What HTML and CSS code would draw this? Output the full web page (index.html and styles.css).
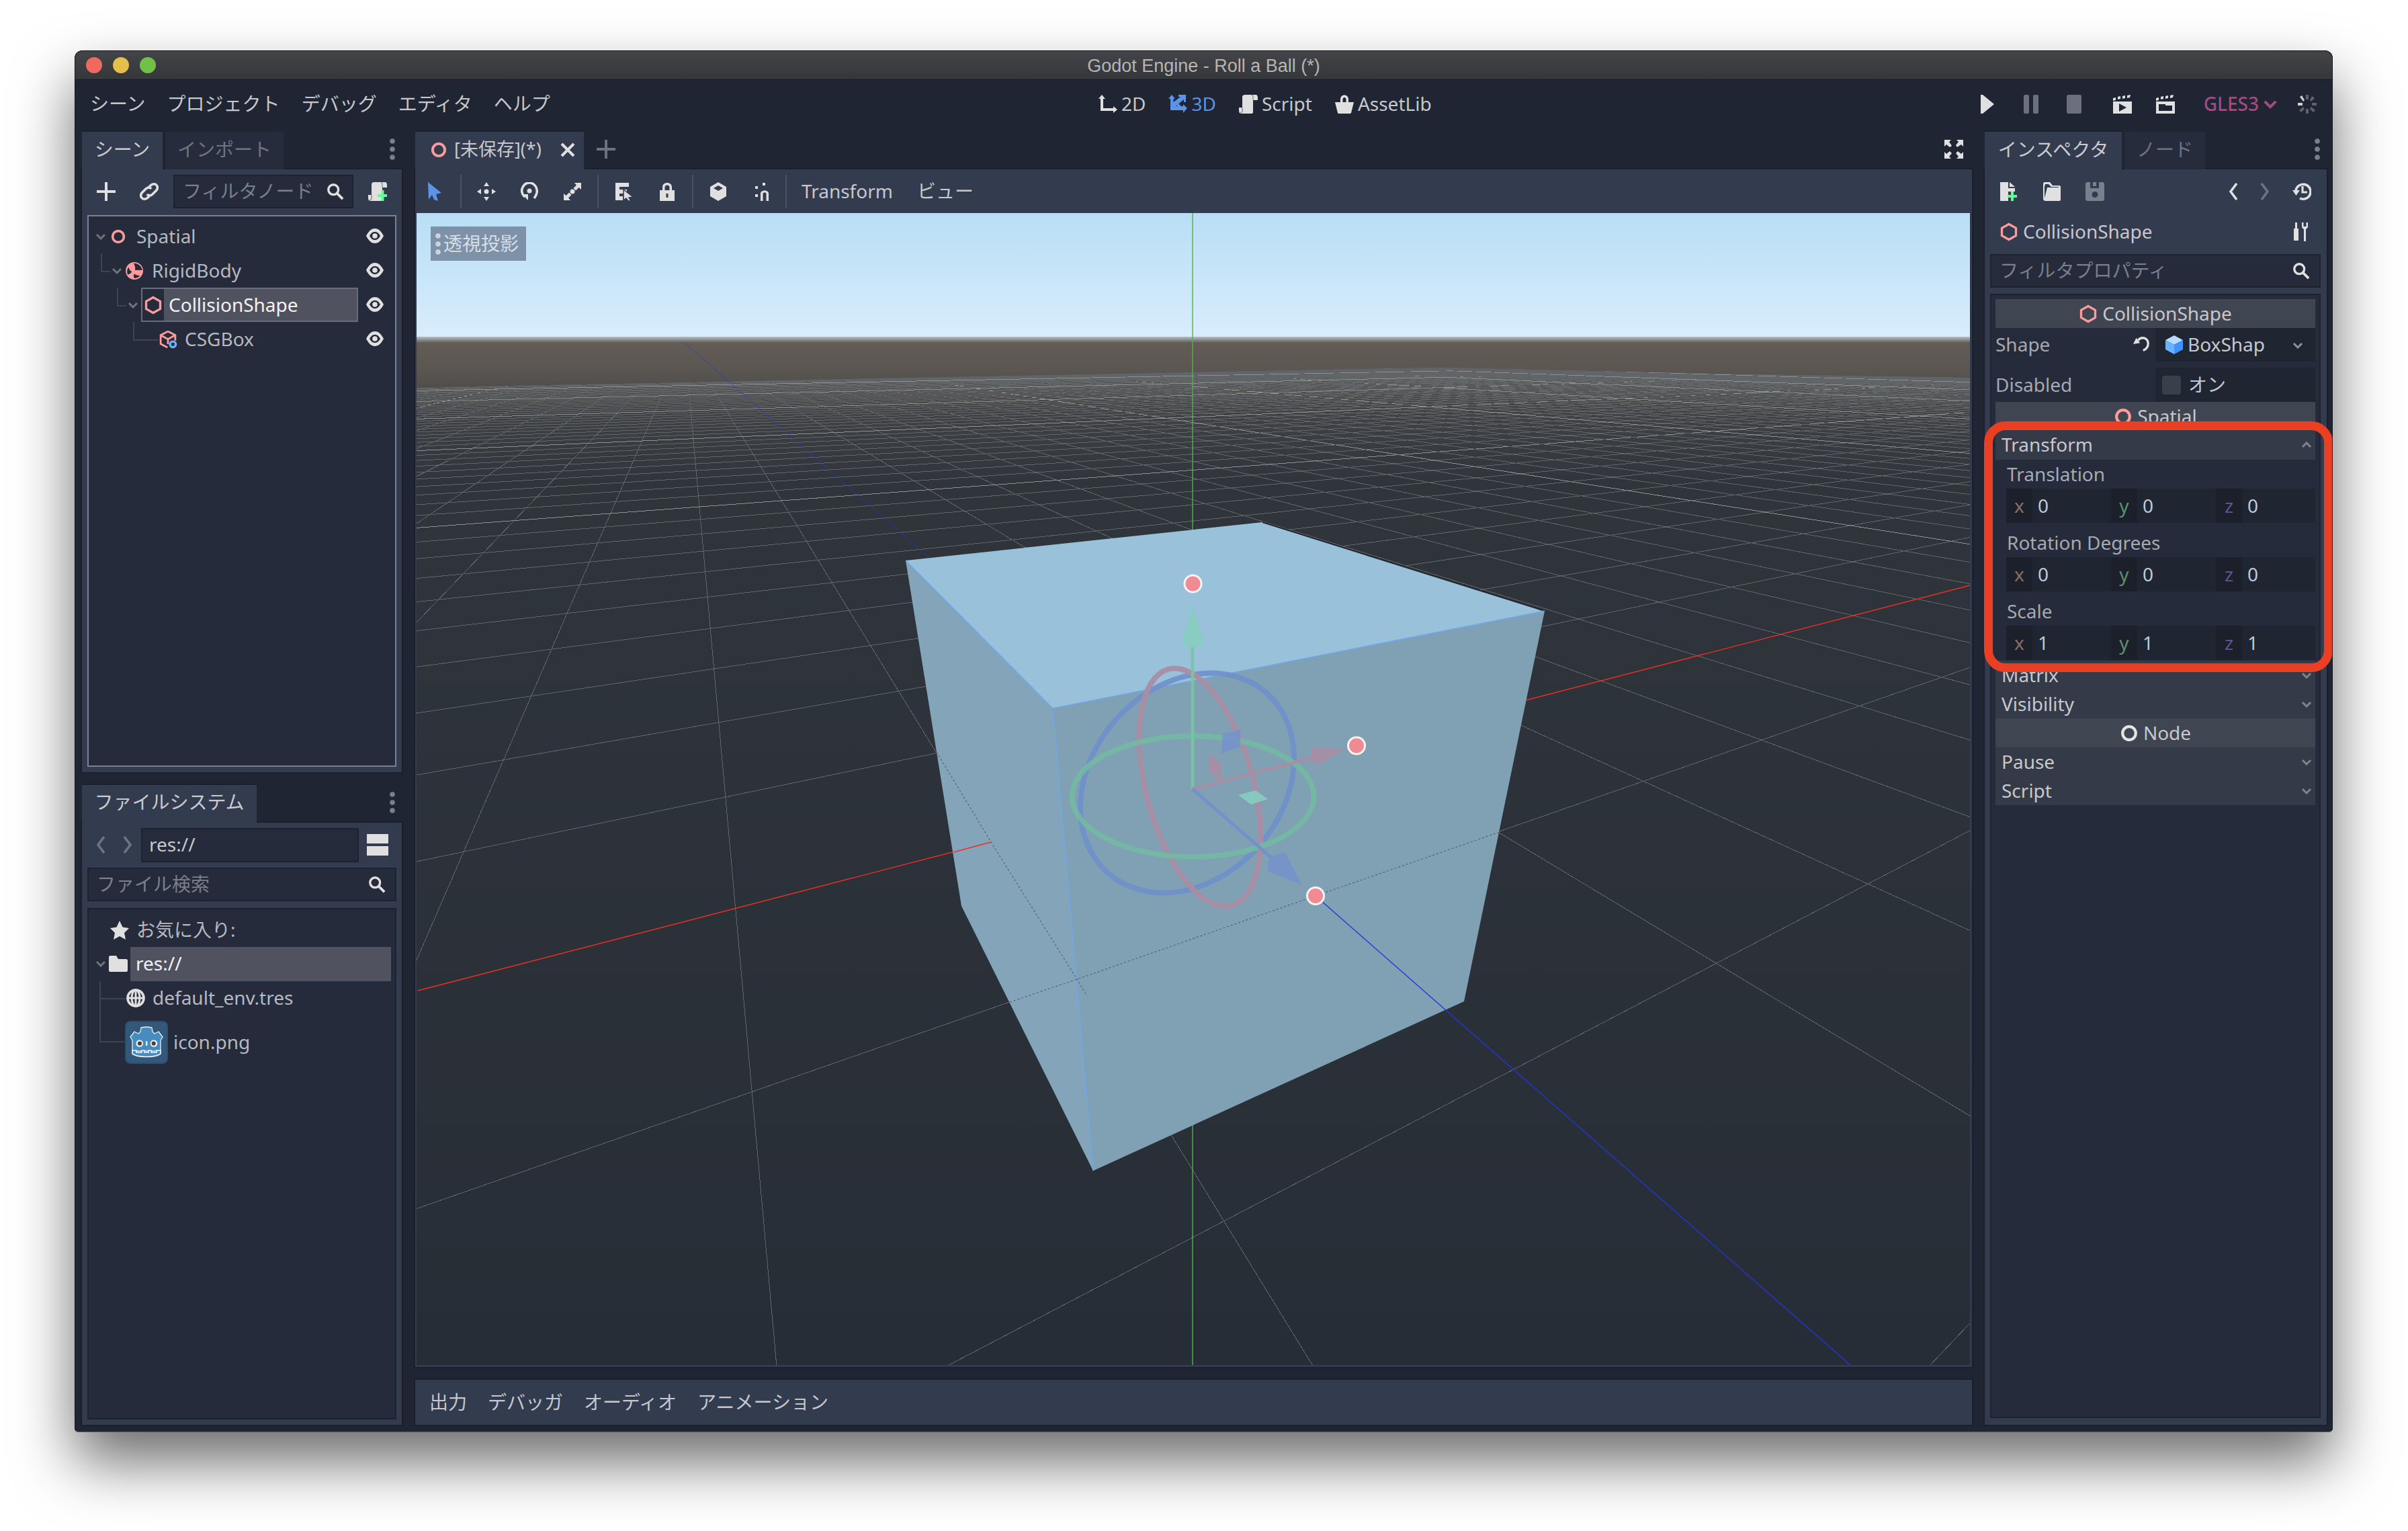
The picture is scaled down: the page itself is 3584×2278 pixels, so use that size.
FILE: index.html
```html
<!DOCTYPE html>
<html lang="ja">
<head>
<meta charset="utf-8">
<title>Godot Engine - Roll a Ball (*)</title>
<link rel="stylesheet" href="styles.css">
</head>
<body>
<svg class="defs" width="0" height="0">
  <defs>
    <symbol id="i-ring" viewBox="0 0 16 16"><circle cx="8" cy="8" r="5.6" fill="none" stroke="currentColor" stroke-width="2.4"/></symbol>
    <symbol id="i-hex" viewBox="0 0 16 16"><path d="M8 1.4 14 4.8V11.2L8 14.6 2 11.2V4.8Z" fill="none" stroke="currentColor" stroke-width="1.9" stroke-linejoin="miter"/></symbol>
    <symbol id="i-rigid" viewBox="0 0 16 16"><circle cx="8" cy="8" r="7.4" fill="#fc9c9c"/><path d="M7.4 1.6C8.4 3.6 9 5.4 8.6 7.4H14.6C14.4 4.2 11 1.4 7.4 1.6ZM3 4.8C3.6 6.6 4.6 8 6 8.8 4.6 10.4 3.4 11 2.4 11.2 1.4 9 1.8 6.4 3 4.8ZM8 10.6C9.6 11.6 11 12.2 12.8 12.2 11.6 13.6 9.8 14.4 8 14.2 7 13.2 7.2 11.6 8 10.6Z" fill="#252b3a"/></symbol>
    <symbol id="i-csg" viewBox="0 0 16 16"><path d="M8 1.2 14.2 4.4V9M8 1.2 1.8 4.4V11.8L7.6 14.8M1.8 4.4 8 7.8 14.2 4.4M8 7.8V12" fill="none" stroke="#fc9c9c" stroke-width="1.6"/><circle cx="12.2" cy="12.2" r="3.4" fill="#69b4ff"/><rect x="10.9" y="10.9" width="2.6" height="2.6" fill="#252b3a"/></symbol>
    <symbol id="i-eye" viewBox="0 0 28 24"><path d="M1 12C5 4 9.500 1 14 1S23 4 27 12C23 20 18.500 23 14 23S5 20 1 12ZM6 12C8.500 16.500 11 18 14 18S19.500 16.500 22 12C19.500 7.500 17 6 14 6S8.500 7.500 6 12Z" fill="#e0e0e0" fill-rule="evenodd"/><circle cx="14" cy="12" r="3.800" fill="#e0e0e0"/></symbol>
    <symbol id="i-chev" viewBox="0 0 16 10"><path d="M2 2 8 8 14 2" fill="none" stroke="currentColor" stroke-width="3"/></symbol>
    <symbol id="i-search" viewBox="0 0 28 28"><circle cx="11" cy="11" r="8" fill="none" stroke="currentColor" stroke-width="3.600"/><path d="M16.500 16.500 26 26" stroke="currentColor" stroke-width="4"/></symbol>
    <symbol id="i-dots" viewBox="0 0 8 32"><circle cx="4" cy="4" r="3.800" fill="currentColor"/><circle cx="4" cy="16" r="3.800" fill="currentColor"/><circle cx="4" cy="28" r="3.800" fill="currentColor"/></symbol>
    <symbol id="i-plus" viewBox="0 0 28 28"><path d="M14 0V28M0 14H28" stroke="currentColor" stroke-width="4"/></symbol>
    <symbol id="i-link" viewBox="0 0 28 28"><path d="M12 9 16 5C19 2 23 2 25 4.500S27 10 24 13L19 18C16 21 12.500 20.500 11 18M16 19 12 23C9 26 5 26 3 23.500S1 18 4 15L9 10C12 7 15.500 7.500 17 10" fill="none" stroke="#e0e0e0" stroke-width="3.600"/></symbol>
    <symbol id="i-scroll" viewBox="0 0 28 28"><path d="M9 0H25C27 0 28 2 28 4V8H21V26C21 27 20 28 19 28H4C2 28 0 27 0 24V19H5V3C5 1 7 0 9 0Z" fill="#e0e0e0"/><path d="M21 8V3C21 1 20 .500 19 .500" stroke="#9a9a9a" stroke-width="1.600" fill="none"/><path d="M5 19V24C5 26 3.500 27 2 26.500" stroke="#9a9a9a" stroke-width="1.800" fill="none"/></symbol>
    <symbol id="i-scriptadd" viewBox="0 0 28 28"><use href="#i-scroll"/><path d="M21.500 12V28M14 20H28" stroke="#5fff97" stroke-width="4" fill="none"/></symbol>
    <symbol id="i-x" viewBox="0 0 24 24"><path d="M3 3 21 21M21 3 3 21" stroke="#e0e0e0" stroke-width="4"/></symbol>
    <symbol id="i-left" viewBox="0 0 14 28"><path d="M12 2 3 14 12 26" fill="none" stroke="currentColor" stroke-width="3.600"/></symbol>
    <symbol id="i-right" viewBox="0 0 14 28"><path d="M2 2 11 14 2 26" fill="none" stroke="currentColor" stroke-width="3.600"/></symbol>
    <symbol id="i-2d" viewBox="0 0 28 28"><path d="M5 0 10 6H7V20H22V17L28 22 22 27V24H3V6H0Z" fill="currentColor"/></symbol>
    <symbol id="i-3d" viewBox="0 0 28 28"><path d="M5 0 10 6H7.500V11L18 3H15V0H26V11H23V7L11 17 22 17V14L28 20 22 27V23H3V6H0Z" fill="currentColor"/><path d="M10 10 21 22" stroke="currentColor" stroke-width="3.500"/></symbol>
    <symbol id="i-bag" viewBox="0 0 28 28"><path d="M8 11V7C8 3 10.500 .500 14 .500S20 3 20 7V11H16.500V7C16.500 5 15.500 4 14 4S11.500 5 11.500 7V11Z" fill="#e0e0e0"/><path d="M0 11H28L24 27C24 27.500 23 28 22 28H6C5 28 4 27.500 4 27Z" fill="#e0e0e0"/></symbol>
    <symbol id="i-select" viewBox="0 0 24 28"><path d="M2 0 22 16 14 18 17 28 11 26 8 19 3 26Z" fill="currentColor"/></symbol>
    <symbol id="i-move" viewBox="0 0 28 28"><path d="M14 0 18 6H10ZM14 28 10 22H18ZM0 14 6 10V18ZM28 14 22 18V10Z" fill="#e0e0e0"/><circle cx="14" cy="14" r="3.500" fill="#e0e0e0"/></symbol>
    <symbol id="i-rotate" viewBox="0 0 28 28"><path d="M7 22C3 18 2 14 3 10 5 4 9 1 14 1S24 5 25 11C26 16 24 20 21 24" fill="none" stroke="#e0e0e0" stroke-width="3.600"/><circle cx="14" cy="13" r="3.500" fill="#e0e0e0"/><path d="M3 18H12V27L9 24Z" fill="#e0e0e0"/></symbol>
    <symbol id="i-scale" viewBox="0 0 28 28"><path d="M17 1H27V11L23.500 8 19 12.500 15.500 9 20 4.500ZM1 17 4.500 20 9 15.500 12.500 19 8 23.500 11 27H1Z" fill="#e0e0e0"/><circle cx="14" cy="14" r="3.500" fill="#e0e0e0"/></symbol>
    <symbol id="i-group" viewBox="0 0 28 28"><path d="M1 1H21V7H7V11H18V17H7V21H12V27H1Z" fill="#e0e0e0"/><path d="M13 11 27 22 21 23 24 28 20 28 17 24 13 27Z" fill="#e0e0e0" stroke="#333b4f" stroke-width="1.500"/></symbol>
    <symbol id="i-lock" viewBox="0 0 28 28"><path d="M7 12V8C7 3 10 1 14 1S21 3 21 8V12H17.500V8C17.500 5.500 16 4.500 14 4.500S10.500 5.500 10.500 8V12Z" fill="#e0e0e0"/><path d="M3 12H25V28H3ZM12.500 17V23H15.500V17Z" fill="#e0e0e0" fill-rule="evenodd"/></symbol>
    <symbol id="i-cube" viewBox="0 0 28 28"><path d="M14 0 26 7V21L14 28 2 21V7ZM14 5 7 9 14 13 21 9Z" fill="#e0e0e0" fill-rule="evenodd"/></symbol>
    <symbol id="i-snap" viewBox="0 0 28 28"><path d="M13 28V17C13 11 25 11 25 17V28H21.500V17C21.500 15 16.500 15 16.500 17V28Z" fill="#e0e0e0"/><rect x="5" y="6" width="4" height="4" fill="#e0e0e0"/><rect x="16" y="1" width="4" height="4" fill="#e0e0e0"/><rect x="5" y="18" width="4" height="4" fill="#e0e0e0"/></symbol>
    <symbol id="i-full" viewBox="0 0 28 28"><path d="M0 0H10L7 3 11 9 8 11 3 7 0 10ZM28 0V10L25 7 19 11 17 8 21 3 18 0ZM0 28V18L3 21 8 17 11 20 7 25 10 28ZM28 28H18L21 25 17 20 20 17 25 21 28 18Z" fill="#e0e0e0"/></symbol>
    <symbol id="i-play" viewBox="0 0 28 28"><path d="M3 0H6L23 14 6 28H3Z" fill="currentColor"/></symbol>
    <symbol id="i-pause" viewBox="0 0 28 28"><rect x="3" y="0" width="8" height="28" rx="2" fill="currentColor"/><rect x="17" y="0" width="8" height="28" rx="2" fill="currentColor"/></symbol>
    <symbol id="i-stop" viewBox="0 0 28 28"><rect x="3" y="0" width="22" height="28" rx="2.500" fill="currentColor"/></symbol>
    <symbol id="i-movie" viewBox="0 0 28 28"><path d="M0 5 4 4V8L0 9ZM7 3 11 2V6L7 7ZM14 2 18 1V5L14 6ZM21 1 26 0 25 4 21 5Z" fill="#e0e0e0"/><path d="M0 10H28V28H0ZM9 13V25L20 19Z" fill="#e0e0e0" fill-rule="evenodd"/></symbol>
    <symbol id="i-movie2" viewBox="0 0 28 28"><path d="M0 5 4 4V8L0 9ZM7 3 11 2V6L7 7ZM14 2 18 1V5L14 6ZM21 1 26 0 25 4 21 5Z" fill="#e0e0e0"/><path d="M0 10H28V28H0ZM4 14V24H24V16H14V14Z" fill="#e0e0e0" fill-rule="evenodd"/></symbol>
    <symbol id="i-spin" viewBox="0 0 28 28"><g fill="#5d626d"><path d="M12 0H16V7H12ZM21 2 25 5 20 10 18 8ZM28 12V16H21V12ZM26 23 23 26 18 21 20 18ZM16 28H12V21H16ZM5 26 2 23 8 18 10 21Z"/></g><path d="M0 16V12H7V16Z" fill="#d0d0d0"/><path d="M3 3 6 1 10 8 8 10Z" fill="#d0d0d0"/></symbol>
    <symbol id="i-newdoc" viewBox="0 0 28 28"><path d="M1 0H13V9H23V14H13V28H1ZM15 0 23 7H15Z" fill="#e0e0e0"/><path d="M19 14V28M12 21H26" stroke="#5fff97" stroke-width="4" fill="none"/></symbol>
    <symbol id="i-open" viewBox="0 0 28 28"><path d="M3 0H11L15 5H25C26 5 27 6 27 7V26C27 27 26 28 25 28H5C3 28 1 27 1 25V3C1 1 2 0 3 0Z" fill="#e0e0e0"/><path d="M3 7V24L7 8H24V7H13L9 3H4Z" fill="#333b4f"/></symbol>
    <symbol id="i-save" viewBox="0 0 28 28"><path d="M3 0H7V9H20V0H25C27 0 28 1 28 3V25C28 27 27 28 25 28H3C1 28 0 27 0 25V3C0 1 1 0 3 0ZM14 14A4.500 4.500 0 1 0 14 23 4.500 4.500 0 0 0 14 14ZM11 0H16V6H11Z" fill="#7a7f8d" fill-rule="evenodd"/></symbol>
    <symbol id="i-history" viewBox="0 0 28 28"><path d="M5 14A11 11 0 1 1 11 24" fill="none" stroke="#e0e0e0" stroke-width="3.600"/><path d="M0 12H11L5.500 20Z" fill="#e0e0e0"/><path d="M15 6V15H22" fill="none" stroke="#e0e0e0" stroke-width="3.200"/></symbol>
    <symbol id="i-tool" viewBox="0 0 28 28"><path d="M5 0H8V9H10V27H3V9H5Z" fill="#e0e0e0"/><path d="M15 0V6C15 8 16.500 9 18 10V28H21V10C22.500 9 24 8 24 6V0H21.500V6H17.500V0Z" fill="#e0e0e0"/></symbol>
    <symbol id="i-revert" viewBox="0 0 28 28"><path d="M9 7C11 4 14 3 16.500 3 21.500 3 25 7 25 12S22 21 17 23" fill="none" stroke="#e0e0e0" stroke-width="3.600"/><path d="M1 13 6 3 12 11Z" fill="#e0e0e0"/></symbol>
    <symbol id="i-box" viewBox="0 0 28 28"><path d="M14 0 27 7 14 14 1 7Z" fill="#b8dcff"/><path d="M1 7 14 14V28L1 21Z" fill="#69b4ff"/><path d="M27 7 14 14V28L27 21Z" fill="#3d93ff"/></symbol>
    <symbol id="i-star" viewBox="0 0 28 28"><path d="M14 0 18.500 9.500 28 11 21 18 23 28 14 23 5 28 7 18 0 11 9.500 9.500Z" fill="#e0e0e0"/></symbol>
    <symbol id="i-folder" viewBox="0 0 28 24"><path d="M2 0H11L14 5H26C27 5 28 6 28 7V22C28 23 27 24 26 24H2C1 24 0 23 0 22V2C0 1 1 0 2 0Z" fill="#e0e0e0"/></symbol>
    <symbol id="i-globe" viewBox="0 0 28 28"><circle cx="14" cy="14" r="12" fill="none" stroke="#e0e0e0" stroke-width="3.600"/><path d="M2 14H26M14 2V26" stroke="#e0e0e0" stroke-width="3"/><ellipse cx="14" cy="14" rx="6" ry="12" fill="none" stroke="#e0e0e0" stroke-width="3"/></symbol>
    <symbol id="i-list" viewBox="0 0 32 32"><rect width="32" height="14" fill="#e0e0e0"/><rect y="18" width="32" height="14" fill="#e0e0e0"/></symbol>
    <symbol id="i-logo" viewBox="0 0 64 64">
      <rect x="1" y="1" width="62" height="62" rx="7" fill="#33587a" stroke="#2f4f6e" stroke-width="2"/>
      <path d="M8 24 14 16 20 19 23 16 24 10 31 9 33 9 40 10 41 16 44 19 50 16 56 24 53 29V45H11V29Z" fill="#478cbf" stroke="#e6f0f7" stroke-width="1.300" stroke-linejoin="round"/>
      <path d="M11 44V49C20 55 44 55 53 49V44H47V47H39V44H35V47H29V44H25V47H17V44Z" fill="#478cbf" stroke="#f0f5fa" stroke-width="1.600"/>
      <circle cx="21.700" cy="33.500" r="5.300" fill="#f0f0f0"/><circle cx="43" cy="33.500" r="5.300" fill="#f0f0f0"/>
      <circle cx="22" cy="33.500" r="3.100" fill="#414042"/><circle cx="42.700" cy="33.500" r="3.100" fill="#414042"/>
      <rect x="31" y="30" width="2.400" height="7" rx="1" fill="#f0f0f0"/>
    </symbol>
  </defs>
</svg>

<div class="window">
  <header class="titlebar">
    <div class="lights"><span class="light l-red"></span><span class="light l-yellow"></span><span class="light l-green"></span></div>
    <div class="title">Godot Engine - Roll a Ball (*)</div>
  </header>

  <nav class="menubar">
    <div class="menu-left"><span>シーン</span><span>プロジェクト</span><span>デバッグ</span><span>エディタ</span><span>ヘルプ</span></div>
    <div class="modes">
      <span class="mode"><svg class="ico"><use href="#i-2d"/></svg>2D</span>
      <span class="mode on"><svg class="ico"><use href="#i-3d"/></svg>3D</span>
      <span class="mode"><svg class="ico"><use href="#i-scroll"/></svg>Script</span>
      <span class="mode"><svg class="ico"><use href="#i-bag"/></svg>AssetLib</span>
    </div>
    <div class="menu-right">
      <svg class="ico bright"><use href="#i-play"/></svg>
      <svg class="ico dim"><use href="#i-pause"/></svg>
      <svg class="ico dim"><use href="#i-stop"/></svg>
      <svg class="ico movie"><use href="#i-movie"/></svg>
      <svg class="ico"><use href="#i-movie2"/></svg>
      <span class="gles">GLES3<svg class="chev-gles"><use href="#i-chev"/></svg></span>
      <svg class="ico"><use href="#i-spin"/></svg>
    </div>
  </nav>

  <div class="workspace">
    <aside class="col-left">
      <section class="dock">
        <div class="tabs">
          <span class="tab active t-scene">シーン</span><span class="tab t-import">インポート</span>
          <svg class="dots"><use href="#i-dots"/></svg>
        </div>
        <div class="panel">
          <div class="tool-row">
            <span class="tbtn"><svg class="ico bright"><use href="#i-plus"/></svg></span>
            <span class="tbtn"><svg class="ico"><use href="#i-link"/></svg></span>
            <div class="field f-scene"><span>フィルタノード</span><svg class="ico-s"><use href="#i-search"/></svg></div>
            <span class="tbtn"><svg class="ico"><use href="#i-scriptadd"/></svg></span>
          </div>
          <div class="tree focus">
            <div class="row ind0"><svg class="tw"><use href="#i-chev"/></svg><svg class="ni pink"><use href="#i-ring"/></svg><span class="rl">Spatial</span><svg class="eye"><use href="#i-eye"/></svg></div>
            <div class="row ind1 conn"><svg class="tw"><use href="#i-chev"/></svg><svg class="ni"><use href="#i-rigid"/></svg><span class="rl">RigidBody</span><svg class="eye"><use href="#i-eye"/></svg></div>
            <div class="row ind2 conn"><svg class="tw"><use href="#i-chev"/></svg><div class="sel"><span class="sel-ic"><svg class="ni pink"><use href="#i-hex"/></svg></span><span class="rl strong">CollisionShape</span></div><svg class="eye"><use href="#i-eye"/></svg></div>
            <div class="row ind3 conn conn-long"><svg class="ni"><use href="#i-csg"/></svg><span class="rl">CSGBox</span><svg class="eye"><use href="#i-eye"/></svg></div>
          </div>
        </div>
      </section>

      <section class="dock">
        <div class="tabs">
          <span class="tab active t-fs">ファイルシステム</span>
          <svg class="dots"><use href="#i-dots"/></svg>
        </div>
        <div class="panel">
          <div class="nav-row">
            <span class="nbtn"><svg class="nav-ic"><use href="#i-left"/></svg></span>
            <span class="nbtn"><svg class="nav-ic"><use href="#i-right"/></svg></span>
            <div class="field f-path"><span class="val">res://</span></div>
            <span class="tbtn"><svg class="list"><use href="#i-list"/></svg></span>
          </div>
          <div class="field f-search"><span>ファイル検索</span><svg class="ico-s"><use href="#i-search"/></svg></div>
          <div class="tree files">
            <div class="frow fav"><svg class="ni"><use href="#i-star"/></svg><span class="rl">お気に入り:</span></div>
            <div class="frow root"><svg class="tw"><use href="#i-chev"/></svg><svg class="ni-f"><use href="#i-folder"/></svg><span class="root-sel">res://</span></div>
            <div class="frow child fconn"><svg class="ni"><use href="#i-globe"/></svg><span class="rl">default_env.tres</span></div>
            <div class="frow big fconn fconn2"><svg class="logo"><use href="#i-logo"/></svg><span class="rl">icon.png</span></div>
          </div>
        </div>
      </section>
    </aside>

    <main class="col-center">
      <div class="tabs tabs-center">
        <span class="tab active t-doc"><svg class="doc-ic pink"><use href="#i-ring"/></svg><span class="doc-name">[未保存](*)</span><svg class="doc-x"><use href="#i-x"/></svg></span>
        <svg class="doc-plus"><use href="#i-plus"/></svg>
        <svg class="doc-full"><use href="#i-full"/></svg>
      </div>
      <div class="editor">
        <div class="ed-toolbar">
          <svg class="tico blue"><use href="#i-select"/></svg><i class="sep s1"></i>
          <svg class="tico"><use href="#i-move"/></svg><svg class="tico"><use href="#i-rotate"/></svg><svg class="tico"><use href="#i-scale"/></svg><i class="sep s2"></i>
          <svg class="tico"><use href="#i-group"/></svg><svg class="tico"><use href="#i-lock"/></svg><i class="sep s3"></i>
          <svg class="tico"><use href="#i-cube"/></svg><svg class="tico"><use href="#i-snap"/></svg><i class="sep s4"></i>
          <span class="ed-menu">Transform</span><span class="ed-menu">ビュー</span>
        </div>
        <div class="viewport">
          <svg class="scene" viewBox="620 317 2312 1714" width="2312" height="1714">
            <defs>
              <linearGradient id="sky" x1="0" y1="0" x2="0" y2="1">
                <stop offset="0" stop-color="#b8def5"/><stop offset="1" stop-color="#d9edfc"/>
              </linearGradient>
              <linearGradient id="ground" x1="0" y1="0" x2="0" y2="1">
                <stop offset="0" stop-color="#b4bfc8"/><stop offset=".006" stop-color="#635c55"/>
                <stop offset=".03" stop-color="#5c5752"/><stop offset=".05" stop-color="#4f4d4c"/>
                <stop offset=".08" stop-color="#3f4145"/><stop offset=".14" stop-color="#30353c"/><stop offset="1" stop-color="#272d36"/>
              </linearGradient>
              <clipPath id="gridclip"><path d="M620 577 1360 562 1626 557 2025 549 2143 547 2321 551 2543 556 2932 562V2031H620Z"/></clipPath>
            </defs>
            <rect x="620" y="317" width="2312" height="186" fill="url(#sky)"/>
            <rect x="620" y="501" width="2312" height="1530" fill="url(#ground)"/>
            <g id="grid" clip-path="url(#gridclip)" class="grid"></g>
            <path class="axis-r" d="M622 1474 1475 1253M2232 1052 2932 871"/>
            <path class="axis-b faint" d="M1019 510 1400 845"/>
            <path class="axis-g" d="M1775 317V790M1775 1672V2031"/>

            <polygon class="face-left" points="1348,834 1567,1054 1627,1742 1431,1348"/>
            <polygon class="face-right" points="1567,1054 2299,909 2179,1490 1627,1742"/>
            <polygon class="face-top" points="1348,834 1879,777 2299,909 1567,1054"/>
            <path class="edge-dark" d="M1879 777 2299 909"/>
            <path class="edge-blue" d="M1348 834 1567 1054 2299 909M1567 1054 1627 1742"/>

            <path class="inner" d="M1394 1119 1475 1253 1603 1457 1618 1482M1503 1491 1603 1457 1958 1333 2232 1238"/>
            <path class="axis-r thin" d="M1419 1268 1475 1253"/>
            <path class="axis-b" d="M1958 1333 2755 2032"/>

            <ellipse class="ring ring-b" cx="1767" cy="1165" rx="178.500" ry="142" transform="rotate(-48.500 1767 1165)"/>
            <ellipse class="ring ring-p" cx="1786" cy="1171.500" rx="182" ry="80" transform="rotate(75.100 1786 1171.500)"/>
            <ellipse class="ring ring-g" cx="1775.500" cy="1185" rx="180" ry="90"/>

            <path class="gz gz-g" d="M1775 1174V960"/>
            <polygon class="tip tip-g" points="1775,901 1792,958 1775,964 1759,958"/>
            <path class="gz gz-r" d="M1775 1174 1955 1127"/>
            <polygon class="tip tip-r" points="2000,1115 1963,1138 1952,1132 1951,1114 1958,1112"/>
            <path class="gz gz-b" d="M1775 1174 1900 1283"/>
            <polygon class="tip tip-b" points="1938,1317 1887,1296 1888,1280 1905,1269 1914,1270"/>
            <polygon class="tip tip-b" points="1820,1092 1846,1086 1846,1111 1818,1121"/>
            <polygon class="tip tip-r" points="1800,1122 1818,1136 1818,1152 1816,1163 1800,1148"/>
            <polygon class="tip tip-g" points="1843,1183 1869,1176 1887,1189 1862,1197"/>

            <circle class="hd-o" cx="1775.500" cy="868.500" r="14"/><circle class="hd-i" cx="1775.500" cy="868.500" r="11"/>
            <circle class="hd-o" cx="2019" cy="1109.500" r="14"/><circle class="hd-i" cx="2019" cy="1109.500" r="11"/>
            <circle class="hd-o" cx="1958" cy="1333" r="14"/><circle class="hd-i" cx="1958" cy="1333" r="11"/>
          </svg>
          <div class="persp"><svg class="persp-dots"><use href="#i-dots"/></svg><span>透視投影</span></div>
        </div>
      </div>
      <footer class="bottom"><span>出力</span><span>デバッガ</span><span>オーディオ</span><span>アニメーション</span></footer>
    </main>

    <aside class="col-right">
      <div class="tabs">
        <span class="tab active t-insp">インスペクタ</span><span class="tab t-node">ノード</span>
        <svg class="dots"><use href="#i-dots"/></svg>
      </div>
      <div class="panel panel-right">
        <div class="insp-tools">
          <svg class="ico"><use href="#i-newdoc"/></svg><svg class="ico"><use href="#i-open"/></svg><svg class="ico"><use href="#i-save"/></svg>
          <span class="spacer"></span>
          <svg class="nav-ic bright"><use href="#i-left"/></svg><svg class="nav-ic faded"><use href="#i-right"/></svg><svg class="ico"><use href="#i-history"/></svg>
        </div>
        <div class="insp-obj"><svg class="ico pink"><use href="#i-hex"/></svg><span>CollisionShape</span><span class="spacer"></span><svg class="ico"><use href="#i-tool"/></svg></div>
        <div class="field f-prop"><span>フィルタプロパティ</span><svg class="ico-s"><use href="#i-search"/></svg></div>
        <div class="scroller">
          <div class="cat"><svg class="cat-ic pink"><use href="#i-hex"/></svg>CollisionShape</div>
          <div class="prop"><span class="pl">Shape<svg class="rev"><use href="#i-revert"/></svg></span><span class="pv"><svg class="box"><use href="#i-box"/></svg>BoxShap<svg class="pv-chev"><use href="#i-chev"/></svg></span></div>
          <div class="prop second"><span class="pl">Disabled</span><span class="pv"><i class="check"></i>オン</span></div>
          <div class="cat"><svg class="cat-ic pink"><use href="#i-ring"/></svg>Spatial</div>
          <div class="sect open">Transform<svg class="s-chev up"><use href="#i-chev"/></svg></div>
          <div class="sub">Translation</div>
          <div class="vec"><span class="cell"><b class="ax x">x</b>0</span><span class="cell"><b class="ax y">y</b>0</span><span class="cell last"><b class="ax z">z</b>0</span></div>
          <div class="sub later">Rotation Degrees</div>
          <div class="vec"><span class="cell"><b class="ax x">x</b>0</span><span class="cell"><b class="ax y">y</b>0</span><span class="cell last"><b class="ax z">z</b>0</span></div>
          <div class="sub later">Scale</div>
          <div class="vec"><span class="cell"><b class="ax x">x</b>1</span><span class="cell"><b class="ax y">y</b>1</span><span class="cell last"><b class="ax z">z</b>1</span></div>
          <div class="sect after">Matrix<svg class="s-chev"><use href="#i-chev"/></svg></div>
          <div class="sect">Visibility<svg class="s-chev"><use href="#i-chev"/></svg></div>
          <div class="cat white"><svg class="cat-ic"><use href="#i-ring"/></svg>Node</div>
          <div class="sect">Pause<svg class="s-chev"><use href="#i-chev"/></svg></div>
          <div class="sect">Script<svg class="s-chev"><use href="#i-chev"/></svg></div>
        </div>
      </div>
    </aside>
  </div>
  <div class="callout"></div>
</div>
<script src="grid.js"></script>
</body>
</html>
```
FILE: styles.css
```css
* { box-sizing: border-box; }
html, body { margin: 0; height: 2278px; overflow: hidden; }
body { background: #fff; font: 28px/1.2 "Noto Sans", "Noto Sans CJK JP", sans-serif; color: #c6c8cd; }
.defs { position: absolute; }
svg { display: block; flex: none; }
i, b { font-style: normal; font-weight: 400; }

.window { position: relative; width: 3361px; height: 2056px; margin: 75px 0 0 111px; background: #1f2532; border-radius: 12px 12px 6px 6px; box-shadow: 0 44px 88px rgba(0,0,0,.58); display: flex; flex-direction: column; }
.window::after { content: ""; position: absolute; inset: 0; border: 1px solid #1a1b1e; border-bottom-color: #55575d; border-radius: 12px 12px 6px 6px; pointer-events: none; }
.titlebar { position: relative; height: 44px; flex: none; background: linear-gradient(#444548, #353639); border-bottom: 1px solid #17181a; border-radius: 12px 12px 0 0; display: flex; align-items: center; justify-content: center; padding-top: 4px; }
.lights { position: absolute; left: 17px; top: 10px; display: flex; gap: 16px; }
.light { width: 24px; height: 24px; border-radius: 50%; }
.l-red { background: #ee6a5e; }
.l-yellow { background: #e3bf4b; }
.l-green { background: #72c04a; }
.title { font: 27px "Liberation Sans", sans-serif; color: #b4b5b7; }

.menubar { height: 77px; flex: none; display: flex; align-items: center; padding: 0 24px 6px 23px; }
.menu-left { width: 1501px; display: flex; gap: 32px; }
.ico { width: 28px; height: 28px; color: #e0e0e0; }
.ico-s { width: 26px; height: 26px; color: #e0e0e0; }
.modes { display: flex; gap: 34px; }
.mode { display: flex; align-items: center; gap: 6px; }
.mode.on, .mode.on .ico { color: #5b93e6; }
.menu-right { margin-left: auto; display: flex; align-items: center; gap: 36px; }
.bright { color: #e0e0e0; }
.dim { color: #6b707c; }
.movie { margin-left: 8px; }
.gles { display: flex; align-items: center; gap: 6px; margin: 0 -6px 0 7px; color: #a14c80; font-weight: 500; }
.chev-gles { width: 22px; height: 14px; color: #a14c80; }

.workspace { flex: 1; min-height: 0; display: flex; padding: 0 0 11px 11px; }
.col-left { width: 476px; display: flex; flex-direction: column; gap: 19px; }
.col-center { width: 2317px; margin-left: 20px; display: flex; flex-direction: column; }
.col-right { width: 509px; margin-left: 19px; display: flex; flex-direction: column; }
.dock { flex: 1; min-height: 0; display: flex; flex-direction: column; }

.tabs { height: 56px; flex: none; display: flex; gap: 4px; position: relative; align-items: stretch; }
.tab { display: flex; align-items: center; justify-content: center; background: #262c3b; color: #6f7482; padding-bottom: 3px; white-space: nowrap; }
.tab.active { background: #333b4f; color: #c9cbd0; box-shadow: 0 -2px 0 #1a1f2b; }
.t-scene { width: 120px; }
.t-import { width: 176px; }
.t-fs { width: 260px; }
.t-insp { width: 204px; }
.t-node { width: 120px; }
.dots { width: 8px; height: 32px; position: absolute; right: 10px; top: 10px; color: #7c808a; }

.panel { flex: 1; min-height: 0; background: #333b4f; box-shadow: 0 0 0 2px #1a1f2b; padding: 8px; display: flex; flex-direction: column; }
.tool-row { height: 50px; flex: none; display: flex; gap: 8px; margin-bottom: 10px; }
.tbtn { width: 56px; flex: none; display: flex; align-items: center; justify-content: center; }
.field { display: flex; align-items: center; justify-content: space-between; background: #252b3a; box-shadow: inset 0 0 0 2px #1d2230; color: #7a7f8a; flex: none; white-space: nowrap; }
.f-scene { width: 268px; padding: 0 14px; }
.tree { flex: 1; min-height: 0; background: #252b3a; padding: 6px 0 0; box-shadow: inset 0 0 0 2px #1d2230; }
.tree.focus { box-shadow: inset 0 0 0 2px #7b8191; }
.row { position: relative; height: 51px; display: flex; align-items: center; color: #b6b9c0; }
.tw { width: 16px; height: 10px; color: #6f737d; margin-right: 4px; }
.ni { width: 28px; height: 28px; margin-right: 11px; }
.pink { color: #fc9c9c; }
.rl { white-space: nowrap; }
.eye { position: absolute; left: 414px; top: 13px; width: 28px; height: 24px; }
.ind0 { padding-left: 12px; }
.ind1 { padding-left: 36px; }
.ind2 { padding-left: 60px; }
.ind3 { padding-left: 106px; }
.ind0 .ni { width: 24px; height: 24px; margin: 0 13px 0 2px; }
.ind0 .rl { margin-left: 2px; }
.ind1 .rl { margin-left: 1px; }
.conn::before { content: ""; position: absolute; top: 0; left: 20px; width: 12px; height: 26px; border-left: 2px solid #3c4351; border-bottom: 2px solid #3c4351; }
.ind2.conn::before { left: 44px; }
.ind3.conn::before { left: 68px; width: 36px; }
.sel { position: absolute; left: 80px; top: 0; width: 323px; height: 51px; display: flex; background: #50535f; box-shadow: inset 0 0 0 2px #676d7e; }
.sel-ic { width: 32px; margin: 2px 0 2px 2px; background: #252b3a; display: flex; align-items: center; justify-content: center; }
.sel-ic .ni { margin: 0; }
.strong { color: #f2f2f2; align-self: center; margin-left: 7px; }

.nav-row { height: 51px; flex: none; display: flex; margin-bottom: 8px; }
.nbtn { width: 40px; display: flex; align-items: center; justify-content: center; color: #6f7482; }
.nav-ic { width: 14px; height: 28px; }
.f-path { width: 324px; padding: 0 12px; }
.val { color: #c6c8cd; }
.list { width: 32px; height: 32px; }
.f-search { height: 50px; padding: 0 16px 0 14px; margin-bottom: 10px; }
.files { padding-top: 8px; }
.frow { position: relative; display: flex; align-items: center; color: #b6b9c0; }
.fav { height: 50px; padding-left: 34px; }
.fav .ni { margin-right: 11px; }
.root { height: 51px; padding-left: 12px; }
.ni-f { width: 28px; height: 24px; }
.root-sel { position: absolute; left: 64px; top: 0; width: 388px; height: 51px; background: #50535f; color: #f2f2f2; padding-left: 8px; display: flex; align-items: center; }
.child { height: 51px; padding-left: 58px; }
.big { height: 78px; padding-left: 56px; margin-top: 1px; }
.logo { width: 64px; height: 64px; margin-right: 8px; }
.fconn::before { content: ""; position: absolute; left: 18px; top: 0; width: 38px; height: 25px; border-left: 2px solid #3c4351; border-bottom: 2px solid #3c4351; }
.fconn2::before { top: -28px; height: 65px; width: 38px; }

.tabs-center { align-items: stretch; }
.t-doc { width: 251px; justify-content: flex-start; padding-left: 22px; }
.doc-ic { width: 26px; height: 26px; }
.doc-name { margin-left: 10px; width: 141px; color: #c6c8cd; font-size: 27px; white-space: nowrap; }
.doc-x { width: 24px; height: 24px; margin-left: 16px; }
.doc-plus { width: 28px; height: 28px; color: #6d7280; margin: 12px 0 0 15px; }
.doc-full { width: 28px; height: 28px; position: absolute; left: 2276px; top: 12px; }
.editor { height: 1782px; flex: none; background: #333b4f; box-shadow: 0 0 0 2px #1a1f2b; display: flex; flex-direction: column; padding: 0 3px 3px 2px; }
.ed-toolbar { height: 65px; flex: none; display: flex; align-items: center; padding-left: 15px; margin-left: -2px; }
.tico { width: 28px; height: 28px; margin-right: 36px; color: #e0e0e0; }
.tico.blue { color: #5b93e6; }
.sep { width: 2px; height: 50px; background: #4b5266; margin-right: 24px; }
.s1 { margin-left: -12px; margin-right: 23px; }
.s2 { margin-left: -13px; margin-right: 24px; }
.s3 { margin-left: -13px; margin-right: 23px; }
.s4 { margin-left: -14px; margin-right: 22px; }
.ed-menu { margin-right: 36px; }
.viewport { position: relative; flex: 1; min-height: 0; overflow: hidden; }
.scene { width: 2312px; height: 1714px; }
.persp { position: absolute; left: 21px; top: 20px; width: 142px; height: 51px; background: #7d91a8; display: flex; align-items: center; padding-left: 7px; gap: 4px; color: #d7dee6; white-space: nowrap; }
.persp-dots { width: 8px; height: 32px; color: #ccd4dd; }

.grid { shape-rendering: crispEdges; fill: none; }
.axis-r { stroke: #ef2f20; stroke-width: 1.400; fill: none; }
.axis-b { stroke: #2038d8; stroke-width: 1.400; fill: none; }
.axis-b.faint { stroke-width: 1; opacity: .65; }
.axis-g { stroke: #55b04f; stroke-width: 1.400; fill: none; }
.face-left { fill: #84a5b9; }
.face-right { fill: #80a0b4; }
.face-top { fill: #99c1da; }
.edge-dark { stroke: #222833; stroke-width: 2; fill: none; }
.edge-blue { stroke: #6ea8ef; stroke-width: 1.500; fill: none; }
.inner { stroke: #4b5560; stroke-width: 1.200; stroke-dasharray: 3 3; fill: none; opacity: .8; }
.ring { fill: none; stroke-width: 8; opacity: .92; }
.ring-b { stroke: #7090cb; }
.ring-p { stroke: #a98da4; }
.ring-g { stroke: #72b9a3; }
.gz { fill: none; stroke-width: 5; opacity: .9; }
.gz-g { stroke: #79c3a5; }
.gz-r { stroke: #a98da4; }
.gz-b { stroke: #7090cb; }
.tip { opacity: .9; }
.tip-g { fill: #86cdbf; }
.tip-r { fill: #a98da4; }
.tip-b { fill: #7592cb; }
.hd-o { fill: #f4f4f4; }
.hd-i { fill: #f08b93; }

.bottom { height: 67px; flex: none; margin-top: 19px; background: #333b4f; box-shadow: 0 0 0 2px #1a1f2b; display: flex; align-items: center; gap: 31px; padding-left: 21px; }

.panel-right { padding: 8px 9px 10px 8px; }
.insp-tools { height: 50px; flex: none; display: flex; align-items: center; padding-left: 14px; padding-right: 14px; gap: 36px; margin-bottom: 10px; }
.insp-tools .nav-ic { margin-left: -2px; }
.insp-tools .faded { color: #6f7482; margin-left: -3px; margin-right: -2px; }
.spacer { flex: 1; }
.insp-obj { height: 50px; flex: none; display: flex; align-items: center; gap: 7px; padding: 0 15px 0 14px; margin-bottom: 8px; }
.f-prop { height: 50px; padding: 0 16px 0 14px; margin-bottom: 9px; }
.scroller { flex: 1; min-height: 0; background: #252b3a; box-shadow: inset 0 0 0 2px #1d2230; padding: 8px; }
.cat { height: 43px; background: #404552; display: flex; align-items: center; justify-content: center; gap: 7px; color: #c6c8cd; }
.cat-ic { width: 28px; height: 28px; }
.cat.white .cat-ic { color: #e4e4e4; }
.prop { height: 50px; display: flex; align-items: stretch; }
.prop.second { height: 51px; margin-top: 9px; }
.pl { width: 238px; position: relative; display: flex; align-items: center; color: #a5a9b1; }
.rev { width: 26px; height: 26px; position: absolute; right: 8px; top: 12px; }
.pv { flex: 1; background: #1f2531; display: flex; align-items: center; padding-left: 14px; color: #c6c8cd; position: relative; }
.box { width: 28px; height: 28px; margin-right: 6px; }
.pv-chev { width: 16px; height: 10px; color: #8e929b; position: absolute; right: 18px; top: 21px; }
.check { width: 28px; height: 28px; border-radius: 4px; background: #3a3f4c; margin: 0 11px 0 -4px; }
.sect { height: 43px; background: #353a48; display: flex; align-items: center; justify-content: space-between; padding: 0 5px 0 9px; color: #c6c8cd; }
.sect.open { height: 44px; margin-top: -1px; }
.s-chev { width: 16px; height: 10px; color: #7f838d; }
.s-chev.up { transform: scaleY(-1); }
.sub { height: 43px; display: flex; align-items: center; padding-left: 17px; color: #a5a9b1; }
.sub.later { margin-top: 8px; }
.vec { height: 51px; display: flex; margin-left: 16px; }
.cell { width: 156px; background: #1f2531; display: flex; align-items: center; color: #c6c8cd; }
.cell.last { width: 148px; }
.ax { width: 39px; align-self: stretch; background: #1b202b; display: flex; align-items: center; justify-content: center; margin-right: 8px; }
.ax.x { color: #8a6f66; }
.ax.y { color: #5c9070; }
.ax.z { color: #62538f; }
.sect.after { margin-top: 1px; }

.callout { position: absolute; left: 2842px; top: 552px; width: 519px; height: 373px; border: 13px solid #ea3f23; border-radius: 32px; }
```
FILE: grid.js
```js
// Ground grid of the 3D viewport: a homography from grid cells to screen pixels,
// fitted on the two vanishing points and the world origin.
(function () {
  var NS = "http://www.w3.org/2000/svg";
  var O = [1775, 1174], R = [4319, 510], B = [1019, 510], a = 0.1055, c = 0.1932;
  var g = document.getElementById("grid");

  function project(x, f) {
    var w = 1 + a * x + c * f;
    return [(O[0] + a * x * R[0] + c * f * B[0]) / w, (O[1] + a * x * R[1] + c * f * B[1]) / w];
  }
  function addLine(p, q, major) {
    var l = document.createElementNS(NS, "line");
    l.setAttribute("x1", p[0].toFixed(1));
    l.setAttribute("y1", p[1].toFixed(1));
    l.setAttribute("x2", q[0].toFixed(1));
    l.setAttribute("y2", q[1].toFixed(1));
    l.setAttribute("stroke", major ? "#8f9090" : "#616568");
    l.setAttribute("stroke-width", "1");
    g.appendChild(l);
  }
  var N = 100, n;
  for (n = -N; n <= N; n++) {
    if (n !== 0) {
      var fNear = Math.max(-6, (0.04 - 1 - a * n) / c);
      addLine(project(n, fNear), project(n, N), n % 10 === 0);
    }
    var xNear = Math.max(-N, (0.04 - 1 - c * n) / a);
    if (n !== 0 && xNear < N) addLine(project(xNear, n), project(N, n), n % 10 === 0);
  }
})();
```
